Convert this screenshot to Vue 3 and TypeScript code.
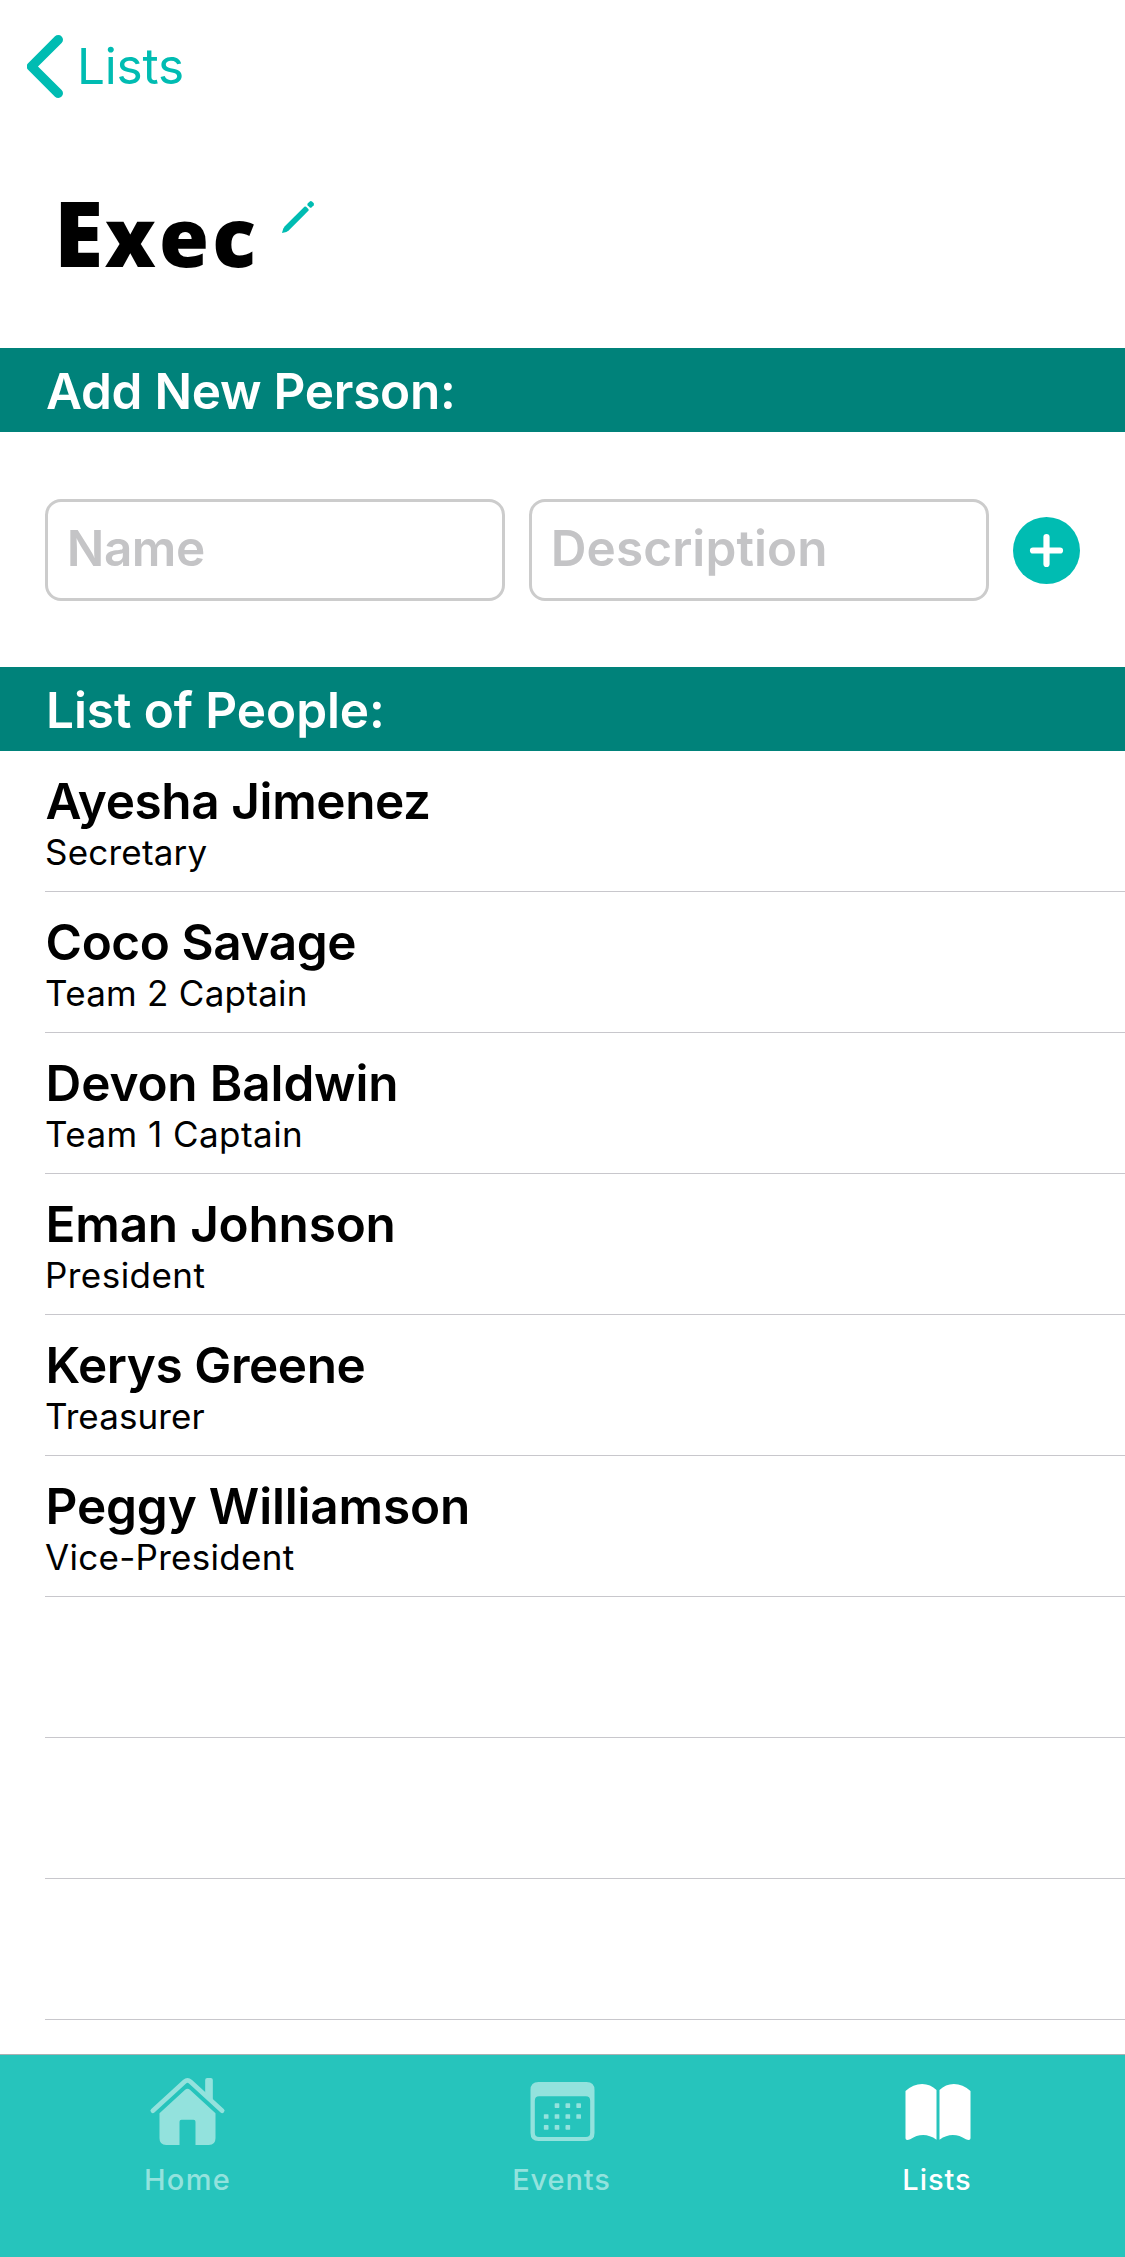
<script setup lang="ts">
interface Person {
  name: string
  role: string
  nameSpacing: number
  roleSpacing: number
}

const people: Person[] = [
  { name: 'Ayesha Jimenez', role: 'Secretary', nameSpacing: -0.4, roleSpacing: 0.21 },
  { name: 'Coco Savage', role: 'Team 2 Captain', nameSpacing: -0.43, roleSpacing: 0.27 },
  { name: 'Devon Baldwin', role: 'Team 1 Captain', nameSpacing: -0.15, roleSpacing: 0.45 },
  { name: 'Eman Johnson', role: 'President', nameSpacing: -0.23, roleSpacing: 0.45 },
  { name: 'Kerys Greene', role: 'Treasurer', nameSpacing: -0.44, roleSpacing: 0.08 },
  { name: 'Peggy Williamson', role: 'Vice-President', nameSpacing: -0.18, roleSpacing: 0.29 },
]

const emptyRows = 3

// Day markers of the calendar glyph, as [column, row]
const days: [number, number][] = [
  [1, 0], [2, 0], [3, 0],
  [0, 1], [1, 1], [2, 1], [3, 1],
  [0, 2], [1, 2], [2, 2],
]
</script>

<template>
  <div class="screen">
    <header class="nav">
      <svg class="chevron" width="36" height="63" viewBox="0 0 36 63">
        <path d="M31.300 4.700L4.400 31.500l26.900 26.800" />
      </svg>
      <a class="back">Lists</a>
    </header>

    <div class="title-row">
      <h1 class="title">Exec</h1>
      <svg class="pencil" width="34" height="34" viewBox="281 200 34 34">
        <path d="M282 233l1.200-4.300 1.600-2.400 19.600-19.600q.9-.6 1.700.1l2.300 2.300q.7.9 0 1.700l-19.700 19.600-2.300 1.500z" />
        <path d="M307.600 203.600l2.200-2.200q1.100-.7 2.200.1l1.600 1.600q.8 1.100.1 2.200l-2.200 2.200q-.9.600-1.700-.1l-2.200-2.200q-.6-.8 0-1.600z" />
      </svg>
    </div>

    <h2 class="bar add">Add New Person:</h2>
    <form class="form" @submit.prevent>
      <input class="field name-field" type="text" placeholder="Name">
      <input class="field" type="text" placeholder="Description">
      <button class="plus" type="button" aria-label="Add">
        <svg width="67" height="67" viewBox="0 0 67 67">
          <circle cx="33.500" cy="33.500" r="33.500" fill="#00bcb2" />
          <path d="M33.500 20v27M20 33.500h27" stroke="#fff" stroke-width="6.200" stroke-linecap="round" />
        </svg>
      </button>
    </form>

    <h2 class="bar">List of People:</h2>
    <ul class="list">
      <li v-for="p in people" :key="p.name" class="row">
        <div class="name" :style="{ letterSpacing: p.nameSpacing + 'px' }">{{ p.name }}</div>
        <div class="role" :style="{ letterSpacing: p.roleSpacing + 'px' }">{{ p.role }}</div>
      </li>
      <li v-for="n in emptyRows" :key="n" class="row"></li>
    </ul>

    <nav class="tabs">
      <a class="tab">
        <svg width="150" height="110" viewBox="-22.500 45 450 330">
          <path d="M254 160V120q0-6 6-6h11q6 0 6 6v62z" />
          <path d="M97 212L192 125q9-8 18 0l95 87" fill="none" stroke="currentColor" stroke-width="14" stroke-linecap="round" />
          <path d="M193 150q8-7 16 0l76 70v75q0 20-20 20h-40v-70q0-6-6-6h-36q-6 0-6 6v70h-40q-20 0-20-20v-75z" />
        </svg>
        <span class="label home">Home</span>
      </a>
      <a class="tab">
        <svg width="150" height="110" viewBox="-7.500 45 450 330">
          <path fill-rule="evenodd" d="M144 126h144q24 0 24 24v129q0 24-24 24H144q-24 0-24-24V150q0-24 24-24zM146 169q-13 0-13 13v96q0 13 13 13h140q13 0 13-13v-96q0-13-13-13z" />
          <rect v-for="([c, r], i) in days" :key="i" :x="160 + c * 32.500" :y="190 + r * 32.500" width="14" height="14" rx="2" />
        </svg>
        <span class="label events">Events</span>
      </a>
      <a class="tab active">
        <svg width="150" height="110" viewBox="7.500 45 450 330">
          <path d="M135 153Q158 132 185 132Q210 132 228 150V299Q208 285 188 285Q168 285 149 298Q135 303 135 295z" />
          <path d="M330 153Q307 132 280 132Q255 132 237 150V299Q257 285 277 285Q297 285 316 298Q330 303 330 295z" />
        </svg>
        <span class="label lists">Lists</span>
      </a>
    </nav>
  </div>
</template>

<style>
body {
  margin: 0;
}
</style>

<style scoped>
.screen {
  width: 1125px;
  height: 2257px;
  display: flex;
  flex-direction: column;
  overflow: hidden;
  background: #fff;
  color: #000;
  font-family: Inter, "Liberation Sans", sans-serif;
}

.nav {
  height: 132px;
  display: flex;
  align-items: flex-start;
  padding: 35px 0 0 27px;
  box-sizing: border-box;
  color: #00bcb2;
}

.chevron path {
  fill: none;
  stroke: #00bcb2;
  stroke-width: 9.4;
  stroke-linecap: round;
  stroke-linejoin: round;
}

.back {
  margin-left: 14px;
  font-size: 49.5px;
  line-height: 62px;
  letter-spacing: -0.2px;
}

.title-row {
  height: 216px;
  display: flex;
  align-items: flex-start;
}

.title {
  width: 227px;
  margin: 0 0 0 54px;
  font: 800 81px/200px "Open Sans", sans-serif;
  letter-spacing: 3.2px;
}

.title::first-letter {
  font-size: 89.6px;
  letter-spacing: 1.5px;
}

.pencil {
  margin-top: 68px;
  fill: #00bcb2;
}

.bar {
  height: 84px;
  margin: 0;
  padding-left: 46px;
  font-size: 49.5px;
  font-weight: 600;
  line-height: 86px;
  letter-spacing: -0.07px;
  background: #00827a;
  color: #fff;
}

.add {
  letter-spacing: -0.27px;
}

.form {
  height: 235px;
  display: flex;
  align-items: center;
  gap: 24px;
  padding: 0 45px;
}

.field {
  width: 460px;
  height: 102px;
  box-sizing: border-box;
  padding: 0 18px 4px 18.8px;
  border: 3px solid #ccc;
  border-radius: 16px;
  outline: none;
  background: #fff;
  color: #000;
  font: 600 49.5px Inter, sans-serif;
  letter-spacing: 0.08px;
}

.name-field {
  letter-spacing: -0.49px;
}

.field::placeholder {
  color: #c4c4c6;
  opacity: 1;
}

.plus {
  width: 67px;
  height: 67px;
  margin-top: 2px;
  padding: 0;
  border: 0;
  background: none;
}

.plus svg {
  display: block;
}

.list {
  flex: 1;
  margin: 0;
  padding: 0 0 0 45px;
  list-style: none;
}

.row {
  height: 141px;
  box-sizing: border-box;
  padding-top: 20px;
  border-bottom: 1px solid #c8c7cc;
}

.name {
  margin-left: 0.6px;
  font-size: 49.5px;
  font-weight: 600;
  line-height: 60px;
}

.role {
  font-size: 35px;
  line-height: 43px;
}

.tabs {
  height: 203px;
  box-sizing: border-box;
  display: flex;
  border-top: 1px solid #aab0b2;
  background: #26c4bc;
}

.tab {
  flex: 1;
  display: flex;
  flex-direction: column;
  align-items: center;
  color: #93e2dd;
}

.tab svg {
  fill: currentColor;
}

.active {
  color: #fff;
}

.label {
  font-size: 29px;
  font-weight: 500;
  line-height: 29px;
}

.home {
  letter-spacing: 1.28px;
}

.events {
  margin-left: -2px;
  letter-spacing: 0.86px;
}

.lists {
  margin-left: -1px;
  letter-spacing: 0.94px;
}
</style>
